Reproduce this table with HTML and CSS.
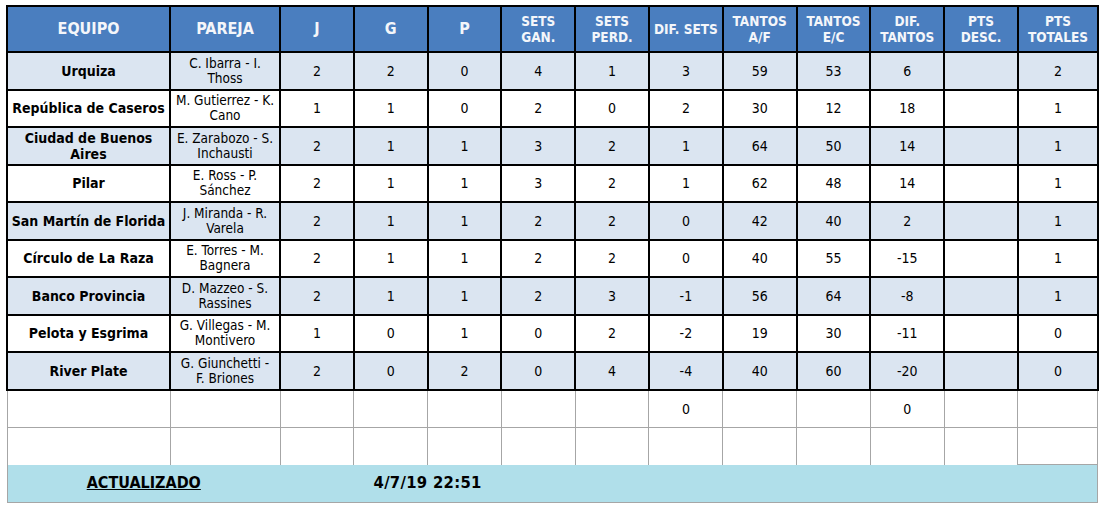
FILE: index.html
```html
<!DOCTYPE html>
<html lang="es">
<head>
<meta charset="utf-8">
<title>Tabla de posiciones</title>
<link rel="stylesheet" href="styles.css">
</head>
<body>
<table class="standings">
  <colgroup>
    <col class="c-team"><col class="c-pair">
    <col class="c-num"><col class="c-num"><col class="c-num"><col class="c-num"><col class="c-num">
    <col class="c-num"><col class="c-num"><col class="c-num"><col class="c-num"><col class="c-num">
    <col class="c-last">
  </colgroup>
  <thead>
    <tr class="head">
      <th class="big">EQUIPO</th>
      <th class="big">PAREJA</th>
      <th class="big">J</th>
      <th class="big">G</th>
      <th class="big">P</th>
      <th>SETS<br>GAN.</th>
      <th>SETS<br>PERD.</th>
      <th>DIF. SETS</th>
      <th>TANTOS<br>A/F</th>
      <th>TANTOS<br>E/C</th>
      <th>DIF.<br>TANTOS</th>
      <th>PTS<br>DESC.</th>
      <th>PTS<br>TOTALES</th>
    </tr>
  </thead>
  <tbody>
    <tr class="alt"><td class="team">Urquiza</td><td class="pair">C. Ibarra - I.<br>Thoss</td><td>2</td><td>2</td><td>0</td><td>4</td><td>1</td><td>3</td><td>59</td><td>53</td><td>6</td><td></td><td>2</td></tr>
    <tr><td class="team">República de Caseros</td><td class="pair">M. Gutierrez - K.<br>Cano</td><td>1</td><td>1</td><td>0</td><td>2</td><td>0</td><td>2</td><td>30</td><td>12</td><td>18</td><td></td><td>1</td></tr>
    <tr class="alt"><td class="team">Ciudad de Buenos<br>Aires</td><td class="pair">E. Zarabozo - S.<br>Inchausti</td><td>2</td><td>1</td><td>1</td><td>3</td><td>2</td><td>1</td><td>64</td><td>50</td><td>14</td><td></td><td>1</td></tr>
    <tr><td class="team">Pilar</td><td class="pair">E. Ross - P.<br>Sánchez</td><td>2</td><td>1</td><td>1</td><td>3</td><td>2</td><td>1</td><td>62</td><td>48</td><td>14</td><td></td><td>1</td></tr>
    <tr class="alt"><td class="team">San Martín de Florida</td><td class="pair">J. Miranda - R.<br>Varela</td><td>2</td><td>1</td><td>1</td><td>2</td><td>2</td><td>0</td><td>42</td><td>40</td><td>2</td><td></td><td>1</td></tr>
    <tr><td class="team">Círculo de La Raza</td><td class="pair">E. Torres - M.<br>Bagnera</td><td>2</td><td>1</td><td>1</td><td>2</td><td>2</td><td>0</td><td>40</td><td>55</td><td>-15</td><td></td><td>1</td></tr>
    <tr class="alt"><td class="team">Banco Provincia</td><td class="pair">D. Mazzeo - S.<br>Rassines</td><td>2</td><td>1</td><td>1</td><td>2</td><td>3</td><td>-1</td><td>56</td><td>64</td><td>-8</td><td></td><td>1</td></tr>
    <tr><td class="team">Pelota y Esgrima</td><td class="pair">G. Villegas - M.<br>Montivero</td><td>1</td><td>0</td><td>1</td><td>0</td><td>2</td><td>-2</td><td>19</td><td>30</td><td>-11</td><td></td><td>0</td></tr>
    <tr class="alt last-data"><td class="team">River Plate</td><td class="pair">G. Giunchetti -<br>F. Briones</td><td>2</td><td>0</td><td>2</td><td>0</td><td>4</td><td>-4</td><td>40</td><td>60</td><td>-20</td><td></td><td>0</td></tr>
    <tr class="empty first"><td></td><td></td><td></td><td></td><td></td><td></td><td></td><td>0</td><td></td><td></td><td>0</td><td></td><td></td></tr>
    <tr class="empty last"><td></td><td></td><td></td><td></td><td></td><td></td><td></td><td></td><td></td><td></td><td></td><td></td><td class="closed"></td></tr>
    <tr class="foot"><td colspan="2" class="label">ACTUALIZADO</td><td colspan="4" class="date">4/7/19 22:51</td><td colspan="7" class="rest"></td></tr>
  </tbody>
</table>
</body>
</html>
```

FILE: styles.css
```css
html, body {
  margin: 0;
  padding: 0;
  background: #ffffff;
}

body {
  padding: 5px 6px;
  font-family: "DejaVu Sans", "Noto Sans", sans-serif;
  font-stretch: condensed;
  color: #000000;
}

.standings {
  border-collapse: collapse;
  table-layout: fixed;
  width: 1091px;
}

.c-team { width: 163px; }
.c-pair { width: 110px; }
.c-num { width: 73.8px; }
.c-last { width: 80px; }

.standings th,
.standings td {
  border: 2px solid #000000;
  text-align: center;
  vertical-align: middle;
  padding: 0 1px;
  overflow: hidden;
  white-space: nowrap;
}

.head {
  height: 46px;
}

.head th {
  background: #4a7ebf;
  color: #f4f6fa;
  font-size: 13.5px;
  font-weight: bold;
  line-height: 16px;
}

.head th.big {
  font-size: 16px;
}

tbody tr {
  height: 37.5px;
}

tbody td {
  font-size: 14px;
  line-height: 16px;
  background: #ffffff;
}

tbody tr.alt td {
  background: #dbe5f1;
}

td.team {
  font-weight: bold;
  font-size: 14px;
}

td.pair {
  font-size: 13.5px;
  line-height: 15px;
}

tr.empty td {
  border: 1px solid #a6a6a6;
}

tr.empty.first td {
  border-top: 2px solid #000000;
}

tr.empty.last td {
  border-bottom: 0 none;
}

tr.empty.last td.closed {
  border-bottom: 1px solid #a6a6a6;
}

tr.foot {
  height: 38px;
}

tr.foot td {
  background: #b0dfea;
  border: 0 none;
  border-bottom: 1px solid #a6a6a6;
  font-size: 16px;
  font-weight: bold;
}

tr.foot td.label {
  border-left: 1px solid #a6a6a6;
  text-decoration: underline;
}

tr.foot td.date {
  font-size: 16.5px;
  letter-spacing: 0.3px;
}

tr.foot td.rest {
  border-right: 1px solid #a6a6a6;
}
```
